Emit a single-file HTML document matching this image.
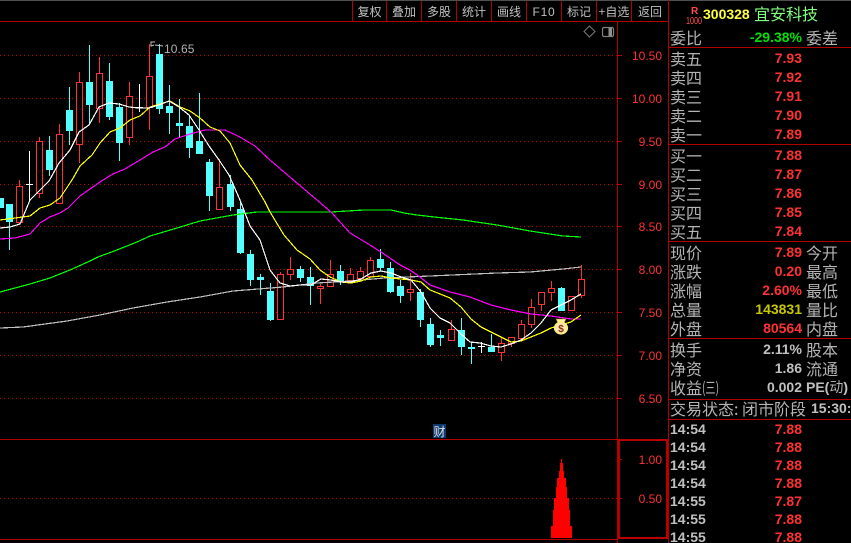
<!DOCTYPE html>
<html><head><meta charset="utf-8"><style>
html,body{margin:0;padding:0;background:#000;width:851px;height:543px;overflow:hidden}
svg{display:block}
text{font-family:"Liberation Sans","WenQuanYi Zen Hei","Noto Sans CJK SC",sans-serif}
.c{font-family:"WenQuanYi Zen Hei","Noto Sans CJK SC","Liberation Sans",sans-serif;font-size:16px;fill:#b4b4b4}
.n{font-family:"Liberation Sans","WenQuanYi Zen Hei",sans-serif;font-size:14px;font-weight:bold;text-anchor:end;fill:#ff3232}
.t{font-family:"Liberation Sans",sans-serif;font-size:14px;font-weight:bold;fill:#c0c0c0}
.b{font-family:"WenQuanYi Zen Hei","Noto Sans CJK SC",sans-serif;font-size:12px;fill:#c0c0c0;text-anchor:middle}
.a{font-family:"Liberation Sans",sans-serif;font-size:12px;fill:#ff3232;text-anchor:end}
.l{fill:none;shape-rendering:crispEdges;stroke-linejoin:round;stroke-width:1.2}
</style></head><body>
<svg width="851" height="543" viewBox="0 0 851 543" xmlns="http://www.w3.org/2000/svg">
<rect width="851" height="543" fill="#000"/>
<rect width="851" height="1" fill="#505050"/>
<!-- grid -->
<g stroke="#c00000" stroke-dasharray="1 3" shape-rendering="crispEdges">
<path d="M0 55.5H617M0 98.5H617M0 141.5H617M0 184.5H617M0 226.5H617M0 269.5H617M0 312.5H617M0 355.5H617M0 398.5H617M0 498.5H617"/>
</g>
<!-- frame lines -->
<g stroke="#b00000" fill="none" shape-rendering="crispEdges">
<path d="M0 21.5H668M0 439.5H668M0 539.5H617M617.5 21V543M668.5 0V543"/>
<path d="M352.5 1V21M386.5 1V21M421.5 1V21M456.5 1V21M491.5 1V21M526.5 1V21M561.5 1V21M596.5 1V21M631.5 1V21"/>
<path d="M668 47.5H851M668 144.5H851M668 241.5H851M668 338.5H851M668 399.5H851M668 419.5H851"/>
<path d="M618 55.5H622M618 98.5H622M618 141.5H622M618 184.5H622M618 226.5H622M618 269.5H622M618 312.5H622M618 355.5H622M618 398.5H622M618 459.5H622M618 498.5H622"/>
</g>
<rect x="619" y="440" width="48" height="98" fill="none" stroke="#b80000" stroke-width="2" shape-rendering="crispEdges"/>
<!-- toolbar -->
<text class="b" x="369.5" y="16">复权</text>
<text class="b" x="404" y="16">叠加</text>
<text class="b" x="439" y="16">多股</text>
<text class="b" x="474" y="16">统计</text>
<text class="b" x="509" y="16">画线</text>
<text class="b" x="544" y="16" style="font-family:'Liberation Sans',sans-serif;font-size:12px;letter-spacing:.8px">F10</text>
<text class="b" x="579" y="16">标记</text>
<text class="b" x="614" y="16">+自选</text>
<text class="b" x="650" y="16">返回</text>
<!-- top icons -->
<path d="M589.5 26L595 31.5L589.5 37L584 31.5Z" fill="none" stroke="#7a7a7a"/>
<rect x="602.5" y="27.5" width="11" height="9" rx="1.5" fill="none" stroke="#808080" stroke-width="1.2"/>
<rect x="608.5" y="28" width="3.5" height="8" fill="#909090"/>
<!-- axis labels -->
<text class="a" x="662" y="60">10.50</text>
<text class="a" x="662" y="103">10.00</text>
<text class="a" x="662" y="146">9.50</text>
<text class="a" x="662" y="189">9.00</text>
<text class="a" x="662" y="231">8.50</text>
<text class="a" x="662" y="274">8.00</text>
<text class="a" x="662" y="317">7.50</text>
<text class="a" x="662" y="360">7.00</text>
<text class="a" x="662" y="403">6.50</text>
<text class="a" x="662" y="464">1.00</text>
<text class="a" x="662" y="503">0.50</text>
<!-- wicks -->
<path shape-rendering="crispEdges" stroke="#54ffff" fill="none" d="M9.5 204V250M49.5 136V176M69.5 87V145M89.5 45V125M109.5 63V120M119.5 103V161M159.5 44V114M169.5 85V134M179.5 99V137M189.5 115V158M199.5 93V154M209.5 159V211M230.5 175V211M240.5 201V254M250.5 250V286M260.5 274V295M270.5 283V321M300.5 266V282M310.5 267V305M340.5 265V285M380.5 249V271M390.5 262V293M400.5 280V303M420.5 289V327M430.5 318V347M440.5 330V346M461.5 318V355M471.5 342V364M491.5 334V352M561.5 287V311"/>
<path shape-rendering="crispEdges" stroke="#ff3232" fill="none" d="M19.5 180V223M39.5 137V198M59.5 124V203M79.5 72V163M99.5 57V123M129.5 82V145M149.5 44V130M219.5 159V210M280.5 272V320M290.5 257V280M320.5 284V304M330.5 260V287M350.5 268V281M360.5 267V279M370.5 257V277M410.5 273V301M451.5 320V341M501.5 337V361M511.5 337V347M521.5 320V339M531.5 299V328M541.5 292V311M551.5 281V301M571.5 296V311M581.5 265V298"/>
<path shape-rendering="crispEdges" stroke="#ffffff" fill="none" d="M29.5 151V200M26 184.5H33M139.5 84V112M136 107.5H143M481.5 342V353M478 346.5H485"/>
<!-- cyan bodies -->
<g fill="#54ffff" shape-rendering="crispEdges">
<rect x="-3" y="198" width="7" height="10"/><rect x="6" y="204" width="7" height="18"/>
<rect x="46" y="150" width="7" height="20"/><rect x="66" y="110" width="7" height="21"/>
<rect x="86" y="82" width="7" height="23"/><rect x="106" y="81" width="7" height="36"/>
<rect x="116" y="107" width="7" height="36"/><rect x="156" y="54" width="7" height="55"/>
<rect x="166" y="106" width="7" height="7"/><rect x="176" y="123" width="7" height="3"/>
<rect x="186" y="126" width="7" height="22"/><rect x="196" y="141" width="7" height="13"/>
<rect x="206" y="162" width="7" height="34"/><rect x="227" y="184" width="7" height="23"/>
<rect x="237" y="209" width="7" height="44"/><rect x="247" y="254" width="7" height="26"/>
<rect x="257" y="277" width="7" height="3"/><rect x="267" y="291" width="7" height="29"/>
<rect x="297" y="269" width="7" height="9"/><rect x="307" y="277" width="7" height="9"/>
<rect x="337" y="271" width="7" height="10"/><rect x="377" y="259" width="7" height="9"/>
<rect x="387" y="268" width="7" height="24"/><rect x="397" y="286" width="7" height="10"/>
<rect x="417" y="292" width="7" height="28"/><rect x="427" y="324" width="7" height="21"/>
<rect x="437" y="335" width="7" height="3"/><rect x="458" y="330" width="7" height="17"/>
<rect x="468" y="347" width="7" height="2"/><rect x="488" y="347" width="7" height="5"/>
<rect x="558" y="288" width="7" height="23"/>
</g>
<!-- red bodies -->
<g fill="#000" stroke="#ff3232" shape-rendering="crispEdges">
<rect x="16.5" y="186.5" width="6" height="36"/><rect x="36.5" y="141.5" width="6" height="52"/>
<rect x="56.5" y="134.5" width="6" height="69"/><rect x="76.5" y="82.5" width="6" height="62"/>
<rect x="96.5" y="73.5" width="6" height="35"/><rect x="126.5" y="96.5" width="6" height="41"/>
<rect x="146.5" y="76.5" width="6" height="31"/><rect x="216.5" y="187.5" width="6" height="22"/>
<rect x="277.5" y="274.5" width="6" height="45"/><rect x="287.5" y="269.5" width="6" height="5"/>
<rect x="317.5" y="286.5" width="6" height="2"/><rect x="327.5" y="274.5" width="6" height="12"/>
<rect x="347.5" y="274.5" width="6" height="6"/><rect x="357.5" y="271.5" width="6" height="7"/>
<rect x="367.5" y="260.5" width="6" height="16"/><rect x="407.5" y="289.5" width="6" height="3"/>
<rect x="448.5" y="329.5" width="6" height="11"/><rect x="498.5" y="343.5" width="6" height="9"/>
<rect x="508.5" y="337.5" width="6" height="6"/><rect x="518.5" y="324.5" width="6" height="14"/>
<rect x="528.5" y="307.5" width="6" height="17"/><rect x="538.5" y="292.5" width="6" height="12"/>
<rect x="548.5" y="288.5" width="6" height="4"/><rect x="568.5" y="296.5" width="6" height="14"/>
<rect x="578.5" y="279.5" width="6" height="16"/>
</g>
<!-- MA lines -->
<polyline class="l" stroke="#00ff00" points="0,292 30,284 50,278 70,270 90,261 98,257 117,250 137,242 150,236 177,228 200,221 233,215 257,212 284,212 331,212 364,210 391,210 404,213 417,215 434,217 463,220 497,225 530,231 563,236 581,237"/>
<polyline class="l" stroke="#c0c0c0" points="0,328 23,327 67,321 100,315 133,308 167,302 200,297 233,291 283,287 317,283 351,281 384,278 430,276 497,273 530,272 563,269 581,267"/>
<polyline class="l" stroke="#ff00ff" points="0,239 15,238 30,234 40,223 50,217 60,213 68,208 80,196 90,189 103,180 113,174 125,169 140,160 153,152 165,147 175,139 190,134 205,130 225,130 240,137 255,146 270,160 284,172 317,200 332,213 350,233 370,245 390,258 400,265 410,270 420,277 430,285 450,292 470,297 491,305 511,310 531,314 551,316 571,319 581,319"/>
<polyline class="l" stroke="#ffff00" points="0,220 30,216 40,208 50,205 60,198 72,180 80,166 92,155 100,143 110,132 120,128 130,120 140,116 150,107 160,104 170,101 180,107 190,111 200,118 210,127 220,131 230,143 240,165 252,180 265,202 270,212 284,235 297,250 310,259 320,270 330,277 341,282 351,283 361,281 371,277 381,276 391,278 401,279 411,280 421,282 430,290 450,298 461,307 471,319 481,327 491,332 501,337 511,342 521,341 531,337 541,333 551,328 571,322 581,315"/>
<polyline class="l" stroke="#ffffff" points="0,228 10,227 20,224 30,200 49,181 59,163 70,150 79,132 89,125 99,107 109,103 119,104 129,107 139,108 149,108 159,105 169,101 179,107 189,115 199,130 209,146 219,160 229,175 240,200 250,226 260,240 270,270 280,283 290,286 300,285 311,285 321,279 331,280 341,282 351,282 361,279 371,273 381,271 391,273 401,277 411,280 421,292 430,308 440,318 450,323 460,333 470,342 480,343 491,346 501,347 511,344 521,340 531,333 541,323 551,310 561,305 571,300 581,294"/>
<!-- high marker -->
<path d="M155 42H151V46L154 45M155 45L163 46" fill="none" stroke="#c0c0c0" stroke-width="1"/>
<text x="164" y="53" style="font-size:12px;fill:#b0b0b0;letter-spacing:.1px">10.65</text>
<!-- money bag -->
<g>
<path d="M558 323L556 319H566L564 323Z" fill="#fff0a0" stroke="#a87830" stroke-width=".6"/>
<ellipse cx="561" cy="328" rx="6.5" ry="6" fill="#f8e8b0" stroke="#ffec70" stroke-width="1.2"/>
<text x="561" y="332" text-anchor="middle" style="font-size:10px;font-weight:bold;fill:#8a3010">$</text>
</g>
<!-- cai badge -->
<rect x="433" y="424" width="13" height="14" fill="#0c3a70"/>
<text x="439.5" y="436" text-anchor="middle" style="font-family:'WenQuanYi Zen Hei','Noto Sans CJK SC',sans-serif;font-size:12px;fill:#e0e0e0">财</text>
<!-- volume triangle -->
<polygon shape-rendering="crispEdges" fill="#ff0000" points="561,459 562,459 562,463 563,463 563,471 564,471 564,478 566,478 566,487 567,487 567,498 569,498 569,510 570,510 570,526 572,526 572,538 551,538 551,526 553,526 553,510 554,510 554,498 556,498 556,487 557,487 557,478 559,478 559,471 560,471 560,463 561,463"/>
<!-- title -->
<text x="691" y="14" style="font-size:10px;font-weight:bold;fill:#ff5050">R</text>
<text x="686" y="24" style="font-size:10px;fill:#ff5050" textLength="16" lengthAdjust="spacingAndGlyphs">1000</text>
<text x="703" y="19" style="font-size:14px;font-weight:bold;fill:#ffff40">300328</text>
<text class="c" x="754" y="20" style="fill:#80ff80">宜安科技</text>
<!-- quote -->
<text class="c" x="670" y="44">委比</text><text class="n" x="802" y="42" style="fill:#00e000">-29.38%</text><text class="c" x="806" y="44">委差</text>
<text class="c" x="670" y="65">卖五</text><text class="n" x="802" y="63">7.93</text>
<text class="c" x="670" y="84">卖四</text><text class="n" x="802" y="82">7.92</text>
<text class="c" x="670" y="103">卖三</text><text class="n" x="802" y="101">7.91</text>
<text class="c" x="670" y="122">卖二</text><text class="n" x="802" y="120">7.90</text>
<text class="c" x="670" y="141">卖一</text><text class="n" x="802" y="139">7.89</text>
<text class="c" x="670" y="162">买一</text><text class="n" x="802" y="160">7.88</text>
<text class="c" x="670" y="181">买二</text><text class="n" x="802" y="179">7.87</text>
<text class="c" x="670" y="200">买三</text><text class="n" x="802" y="198">7.86</text>
<text class="c" x="670" y="219">买四</text><text class="n" x="802" y="217">7.85</text>
<text class="c" x="670" y="238">买五</text><text class="n" x="802" y="236">7.84</text>
<text class="c" x="670" y="259">现价</text><text class="n" x="802" y="257">7.89</text><text class="c" x="806" y="259">今开</text>
<text class="c" x="670" y="278">涨跌</text><text class="n" x="802" y="276">0.20</text><text class="c" x="806" y="278">最高</text>
<text class="c" x="670" y="297">涨幅</text><text class="n" x="802" y="295">2.60%</text><text class="c" x="806" y="297">最低</text>
<text class="c" x="670" y="316">总量</text><text class="n" x="802" y="314" style="fill:#c8c800">143831</text><text class="c" x="806" y="316">量比</text>
<text class="c" x="670" y="335">外盘</text><text class="n" x="802" y="333">80564</text><text class="c" x="806" y="335">内盘</text>
<text class="c" x="670" y="356">换手</text><text class="n" x="802" y="354" style="fill:#c0c0c0">2.11%</text><text class="c" x="806" y="356">股本</text>
<text class="c" x="670" y="375">净资</text><text class="n" x="802" y="373" style="fill:#c0c0c0">1.86</text><text class="c" x="806" y="375">流通</text>
<text class="c" x="670" y="394">收益</text><text class="c" x="702" y="393" style="font-size:15px" textLength="17" lengthAdjust="spacingAndGlyphs">(三)</text><text class="n" x="802" y="392" style="fill:#c0c0c0">0.002</text><text class="t" x="806" y="392">PE(<tspan class="c" style="font-size:14px;font-weight:normal">动</tspan>)</text>
<text class="c" x="670" y="415">交易状态:</text><text class="c" x="742" y="415">闭市阶段</text><text class="t" x="811" y="413">15:30:</text>
<!-- ticks -->
<text class="t" x="670" y="434">14:54</text><text class="n" x="802" y="434">7.88</text>
<text class="t" x="670" y="452">14:54</text><text class="n" x="802" y="452">7.88</text>
<text class="t" x="670" y="470">14:54</text><text class="n" x="802" y="470">7.88</text>
<text class="t" x="670" y="488">14:54</text><text class="n" x="802" y="488">7.88</text>
<text class="t" x="670" y="506">14:55</text><text class="n" x="802" y="506">7.87</text>
<text class="t" x="670" y="524">14:55</text><text class="n" x="802" y="524">7.88</text>
<text class="t" x="670" y="542">14:55</text><text class="n" x="802" y="542">7.88</text>
</svg>
</body></html>
